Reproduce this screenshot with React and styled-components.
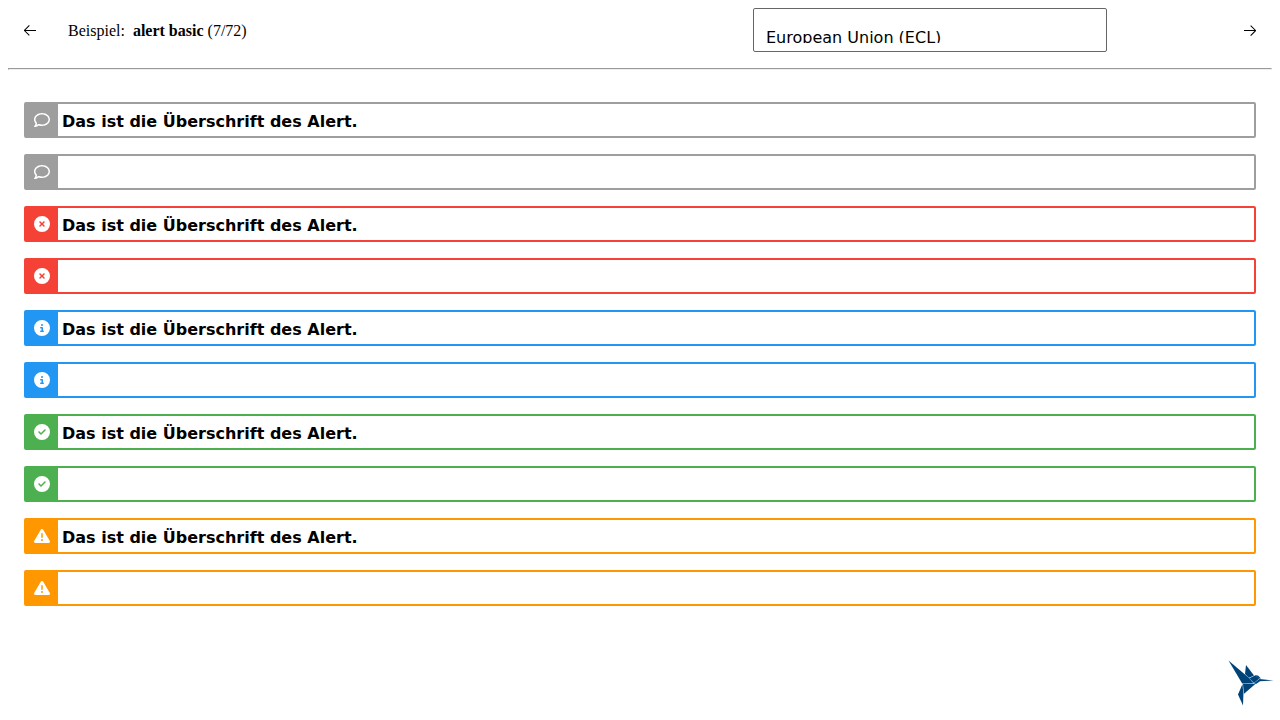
import React from 'react';
import styled, { createGlobalStyle } from 'styled-components';
import { VscArrowLeft, VscArrowRight } from 'react-icons/vsc';
import {
  FaRegComment,
  FaCircleXmark,
  FaCircleInfo,
  FaCircleCheck,
  FaTriangleExclamation,
} from 'react-icons/fa6';

const GlobalStyle = createGlobalStyle`
  *, *::before, *::after { box-sizing: border-box; }
  body {
    margin: 8px;
    background: #fff;
    color: #000;
    font: 16px/18px "Liberation Serif", "Times New Roman", serif;
  }
`;

const Header = styled.header`
  display: flex;
  align-items: center;
  justify-content: space-between;
  height: 44px;
  padding: 0 14px;
`;

const Lead = styled.div`
  display: flex;
  align-items: center;
  gap: 30px;
`;

const NavLink = styled.a`
  display: flex;
  color: #000;
  font-size: 16px;
`;

const Trail = styled.div`
  display: flex;
  align-items: center;
  justify-content: space-between;
  width: 505px;
`;

const Title = styled.p`
  margin: 0;
  padding-top: 2px;

  strong { margin-left: 4px; }
`;

const ThemeSelect = styled.select`
  appearance: none;
  width: 354px;
  height: 44px;
  padding: 19px 12px 8px;
  border: 1px solid #666;
  border-radius: 2px;
  background: #fff;
  color: #000;
  font: 16px/19px Verdana, "DejaVu Sans", sans-serif;
`;

const Divider = styled.hr`
  margin: 16px 0;
  border: 1px solid;
  border-color: #9a9a9a #eee #eee #9a9a9a;
`;

const AlertList = styled.main`
  display: grid;
  gap: 16px;
  padding: 16px;
`;

const palette = {
  default: '#9e9e9e',
  error: '#f44336',
  info: '#2196f3',
  success: '#4caf50',
  warning: '#ff9800',
};

const AlertBox = styled.section`
  display: flex;
  min-height: 36px;
  border: 2px solid ${({ $type }) => palette[$type]};
  border-radius: 2px;
`;

const AlertIcon = styled.div`
  display: flex;
  align-items: center;
  justify-content: center;
  width: 32px;
  background: ${({ $type }) => palette[$type]};
  color: #fff;
  font-size: 16px;
`;

const AlertHeading = styled.h2`
  margin: 0;
  padding: 4px 4px 0;
  font: bold 16px/28px Verdana, "DejaVu Sans", sans-serif;
`;

const Logo = styled.svg`
  position: fixed;
  right: 6px;
  bottom: 14px;
  width: 46px;
  height: 46px;
`;

const icons = {
  default: FaRegComment,
  error: FaCircleXmark,
  info: FaCircleInfo,
  success: FaCircleCheck,
  warning: FaTriangleExclamation,
};

function Alert({ type, heading }) {
  const Icon = icons[type];
  return (
    <AlertBox $type={type}>
      <AlertIcon $type={type}><Icon aria-hidden="true" /></AlertIcon>
      {heading && <AlertHeading>{heading}</AlertHeading>}
    </AlertBox>
  );
}

function Hummingbird() {
  return (
    <Logo viewBox="0 0 46 46" fill="#004378" aria-hidden="true">
      <path d="M0.5 0.5 L20.8 17.8 L25.5 23.2 L14.2 23.4 Z" />
      <path d="M18 5 L26 15.5 L21 17.8 L17 14 Z" />
      <path d="M21.3 18.2 L27.5 15.2 L31.3 18.6 L26 23 Z" />
      <path d="M27.2 15.2 L30 15.4 L33 18.6 L31.2 18.4 Z" />
      <path d="M31.3 19 L45.5 20.5 L32 21.2 L28 24 L26 23.3 Z" />
      <path d="M15 23.8 L27.6 23.8 L15.8 34 Z" />
      <path d="M14.5 24 L15.4 34.5 L15 45.5 L10 34.5 Z" />
    </Logo>
  );
}

export default function App() {
  return (
    <>
      <GlobalStyle />
      <Header>
        <Lead>
          <NavLink href="#previous" aria-label="Vorheriges Beispiel"><VscArrowLeft /></NavLink>
          <Title>Beispiel: <strong>alert basic</strong> (7/72)</Title>
        </Lead>
        <Trail>
          <ThemeSelect aria-label="Theme" defaultValue="ecl-eu">
            <option value="ecl-eu">European Union (ECL)</option>
          </ThemeSelect>
          <NavLink href="#next" aria-label="Nächstes Beispiel"><VscArrowRight /></NavLink>
        </Trail>
      </Header>
      <Divider />
      <AlertList>
        {Object.keys(palette).map((type) => (
          <React.Fragment key={type}>
            <Alert type={type} heading="Das ist die Überschrift des Alert." />
            <Alert type={type} />
          </React.Fragment>
        ))}
      </AlertList>
      <Hummingbird />
    </>
  );
}
